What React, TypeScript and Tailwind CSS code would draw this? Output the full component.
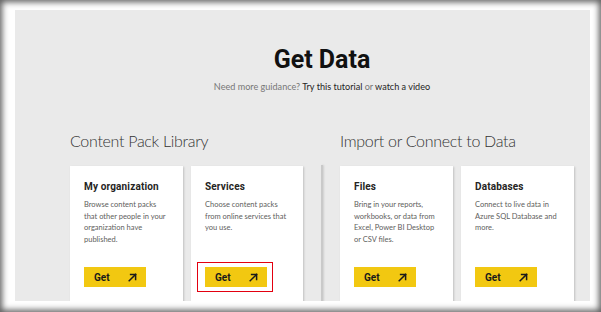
import React from "react";

const Arrow = () => (
  <svg width="9" height="9" viewBox="0 0 9 9" fill="none" stroke="#1a1a1a" strokeWidth="1.5" strokeLinecap="square">
    <path d="M1.2 7.8 L7.6 1.4" />
    <path d="M2.6 1.4 H7.6 V6.4" />
  </svg>
);

type CardProps = { title: string; lines: string[]; highlight?: boolean };

const Card = ({ title, lines, highlight }: CardProps) => (
  <div className="relative h-[150px] bg-white shadow-[1px_1px_2px_rgba(0,0,0,0.18)] pl-[14px] pt-[13px]">
    <div className="text-[10px] font-bold leading-[16px] text-[#252423] tracking-[0.15px]" style={{ fontFamily: "Roboto, sans-serif" }}>
      {title}
    </div>
    <div className="mt-[4px] text-[7.5px] leading-[11.6px] text-[#605e5c]" style={{ fontFamily: "Lato, sans-serif" }}>
      {lines.map((l, i) => (
        <div key={i}>{l}</div>
      ))}
    </div>
    <div className="absolute left-[14px] top-[101px]">
      {highlight && <div className="absolute -left-[8px] -top-[5px] w-[76px] h-[30px] border-[1.5px] border-[#e3000f]" />}
      <div className="flex items-center justify-between w-[62px] h-[20px] bg-[#f2c811] pl-[10px] pr-[9px]">
        <span className="text-[10px] font-bold text-[#1a1a1a]" style={{ fontFamily: "Roboto, sans-serif" }}>Get</span>
        <Arrow />
      </div>
    </div>
  </div>
);

export default function App() {
  return (
    <div className="w-[601px] h-[312px] bg-white pt-[10px] pl-[15px] pr-[11px] pb-[11px] shadow-[inset_0_0_6px_2px_rgba(0,0,0,0.65)]">
      <div className="w-full h-full bg-[#eaeaea] overflow-hidden pl-[55px]">
        <div className="w-[504px]">
          <div className="pt-[37px] text-center">
            <div className="text-[25px] leading-[25px] font-bold text-[#111]" style={{ fontFamily: "Roboto, sans-serif" }}>
              Get Data
            </div>
            <div className="mt-[9px] text-[9.1px] leading-[12px] text-[#777]" style={{ fontFamily: "Lato, sans-serif" }}>
              Need more guidance? <span className="text-[#252423]">Try this tutorial</span> or{" "}
              <span className="text-[#252423]">watch a video</span>
            </div>
          </div>
          <div className="flex mt-[38px]">
            <div className="w-[233px]">
              <div className="text-[16px] leading-[20px] font-light text-[#333] tracking-[-0.3px]" style={{ fontFamily: "Lato, sans-serif" }}>
                Content Pack Library
              </div>
              <div className="grid grid-cols-[113px_112px] gap-[8px] mt-[15px]">
                <Card title="My organization" lines={["Browse content packs", "that other people in your", "organization have", "published."]} />
                <Card title="Services" lines={["Choose content packs", "from online services that", "you use."]} highlight />
              </div>
            </div>
            <div className="w-[2px] ml-[18px] mr-[17px] mt-[34px] bg-[#c9c9c9] shadow-[1px_0_2px_rgba(0,0,0,0.12)]" />
            <div className="w-[234px]">
              <div className="text-[16px] leading-[20px] font-light text-[#333] tracking-[-0.3px]" style={{ fontFamily: "Lato, sans-serif" }}>
                Import or Connect to Data
              </div>
              <div className="grid grid-cols-[113px_113px] gap-[8px] mt-[15px]">
                <Card title="Files" lines={["Bring in your reports,", "workbooks, or data from", "Excel, Power BI Desktop", "or CSV files."]} />
                <Card title="Databases" lines={["Connect to live data in", "Azure SQL Database and", "more."]} />
              </div>
            </div>
          </div>
        </div>
      </div>
    </div>
  );
}
